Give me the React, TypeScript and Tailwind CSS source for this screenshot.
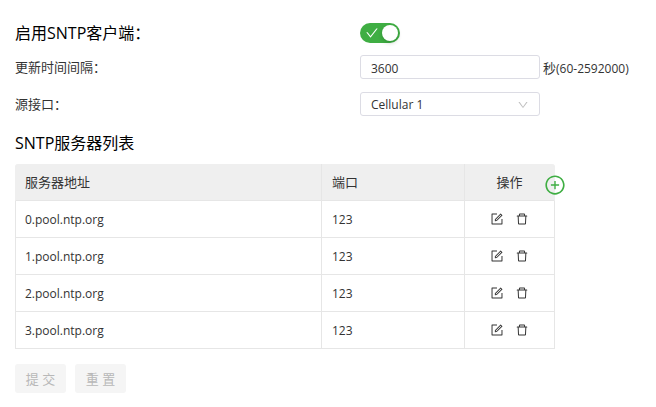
import { useState } from "react";
import {
  AiOutlineCheck,
  AiOutlineDelete,
  AiOutlineDown,
  AiOutlineForm,
  AiOutlinePlusCircle,
} from "react-icons/ai";

const servers = [
  { address: "0.pool.ntp.org", port: 123 },
  { address: "1.pool.ntp.org", port: 123 },
  { address: "2.pool.ntp.org", port: 123 },
  { address: "3.pool.ntp.org", port: 123 },
];

const fieldClass =
  "h-6 w-[180px] appearance-none rounded-[3px] border border-[#dcdce4] bg-white px-[10px] pt-[2px] text-xs leading-4 text-[#333] outline-none";

const actionClass = "flex size-[14px] items-center justify-center text-[#333]";

const buttonClass =
  "h-[29px] w-[51px] rounded-[3px] bg-[#f5f5f5] text-[13px] leading-5 text-[#b8b8b8]";

export default function App() {
  const [enabled, setEnabled] = useState(true);
  const [interval, setIntervalValue] = useState("3600");

  return (
    <main className="min-h-screen bg-white px-[15px] pt-[21px] pb-[13px] font-['Open_Sans','Noto_Sans_CJK_SC',sans-serif] text-[13px] leading-5 text-[#333]">
      <form onSubmit={(event) => event.preventDefault()}>
        <div className="grid grid-cols-[345px_1fr] items-center">
          <label htmlFor="enabled" className="text-base leading-6 text-black">
            启用SNTP客户端：
          </label>
          <div className="relative h-5 w-10">
            <input
              id="enabled"
              type="checkbox"
              role="switch"
              checked={enabled}
              onChange={(event) => setEnabled(event.target.checked)}
              className="peer block h-5 w-10 cursor-pointer appearance-none rounded-full bg-[#bfbfbf] checked:bg-[#3fae43]"
            />
            <AiOutlineCheck
              size={14}
              className="pointer-events-none absolute top-[3px] left-[5px] hidden text-white peer-checked:block"
            />
            <span className="pointer-events-none absolute top-[2px] left-[2px] size-4 rounded-full bg-white shadow-[0_2px_4px_rgba(0,35,11,0.2)] peer-checked:left-[22px]" />
          </div>
        </div>

        <div className="mt-[10px] grid grid-cols-[345px_1fr] items-center">
          <label htmlFor="interval">更新时间间隔：</label>
          <div className="flex items-center gap-[3px]">
            <input
              id="interval"
              value={interval}
              onChange={(event) => setIntervalValue(event.target.value)}
              className={fieldClass}
            />
            <span className="pt-[2px] text-xs leading-5 whitespace-nowrap">
              <span className="text-[13px]">秒</span>(60-2592000)
            </span>
          </div>
        </div>

        <div className="mt-[13px] grid grid-cols-[345px_1fr] items-center">
          <label htmlFor="source">源接口：</label>
          <div className="relative w-[180px]">
            <select id="source" className={fieldClass + " block"}>
              <option>Cellular 1</option>
            </select>
            <AiOutlineDown
              size={12}
              className="pointer-events-none absolute top-[7px] right-[11px] text-[#bfbfbf]"
            />
          </div>
        </div>

        <h2 className="mt-[15px] text-base leading-6 text-black">SNTP服务器列表</h2>

        <div className="relative mt-[9px] max-w-[540px]">
          <table className="w-full table-fixed border-separate border-spacing-0 text-left">
            <colgroup>
              <col className="w-[306px]" />
              <col />
              <col className="w-[91px]" />
            </colgroup>
            <thead>
              <tr className="h-[37px]">
                <th className="rounded-tl-[3px] border-b border-l border-b-[#e6e6e6] border-l-[#efefef] bg-[#efefef] px-[9px] font-normal">
                  服务器地址
                </th>
                <th className="border-b border-l border-[#e6e6e6] bg-[#efefef] px-[10px] font-normal">
                  端口
                </th>
                <th className="rounded-tr-[3px] border-x border-b border-[#e6e6e6] border-r-[#efefef] bg-[#efefef] text-center font-normal">
                  操作
                </th>
              </tr>
            </thead>
            <tbody>
              {servers.map((server) => (
                <tr key={server.address} className="h-[37px] text-xs leading-5">
                  <td className="border-b border-l border-[#e6e6e6] px-[9px] pt-[2px] pb-px">
                    {server.address}
                  </td>
                  <td className="border-b border-l border-[#e6e6e6] px-[10px] pt-[2px] pb-px">
                    {server.port}
                  </td>
                  <td className="border-x border-b border-[#e6e6e6]">
                    <div className="flex items-center justify-center gap-[11px]">
                      <button type="button" aria-label="编辑" className={actionClass}>
                        <AiOutlineForm size={14} />
                      </button>
                      <button type="button" aria-label="删除" className={actionClass}>
                        <AiOutlineDelete size={14} />
                      </button>
                    </div>
                  </td>
                </tr>
              ))}
            </tbody>
          </table>
          <button
            type="button"
            aria-label="添加"
            className="absolute top-[10px] -right-[11px] text-[#3fae43]"
          >
            <AiOutlinePlusCircle size={22} />
          </button>
        </div>

        <div className="mt-[15px] flex gap-[9px]">
          <button type="submit" disabled className={buttonClass}>
            提 交
          </button>
          <button type="reset" disabled className={buttonClass}>
            重 置
          </button>
        </div>
      </form>
    </main>
  );
}
